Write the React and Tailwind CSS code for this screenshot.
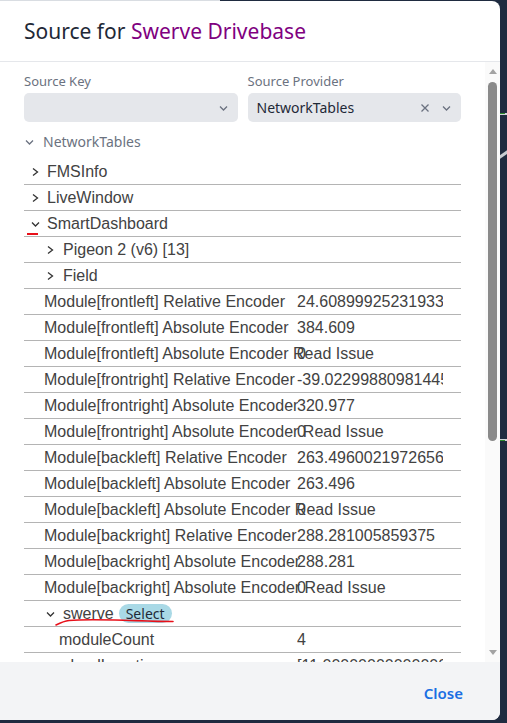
import React from 'react'

const tree = "font-['Liberation_Sans',Arial,sans-serif] text-[16px] text-[#424242]"
const ui = "font-['Noto_Sans','Open_Sans',sans-serif]"

function ChevronRight() {
  return (
    <svg width="10" height="10" viewBox="0 0 10 10" className="shrink-0 text-[#333]" aria-hidden>
      <polyline points="3,1.5 7.5,5 3,8.5" fill="none" stroke="currentColor" strokeWidth="1.3" />
    </svg>
  )
}

function ChevronDown({ className = 'text-[#333]' }) {
  return (
    <svg width="10" height="10" viewBox="0 0 10 10" className={`shrink-0 ${className}`} aria-hidden>
      <polyline points="2,3.5 5.5,7 9,3.5" fill="none" stroke="currentColor" strokeWidth="1.3" />
    </svg>
  )
}

const modules = [
  ['Module[frontleft] Relative Encoder', '24.608999252319336'],
  ['Module[frontleft] Absolute Encoder', '384.609'],
  ['Module[frontleft] Absolute Encoder Read Issue', '0'],
  ['Module[frontright] Relative Encoder', '-39.022998809814453'],
  ['Module[frontright] Absolute Encoder', '320.977'],
  ['Module[frontright] Absolute Encoder Read Issue', '0'],
  ['Module[backleft] Relative Encoder', '263.4960021972656'],
  ['Module[backleft] Absolute Encoder', '263.496'],
  ['Module[backleft] Absolute Encoder Read Issue', '0'],
  ['Module[backright] Relative Encoder', '288.281005859375'],
  ['Module[backright] Absolute Encoder', '288.281'],
  ['Module[backright] Absolute Encoder Read Issue', '0'],
]

function Leaf({ name, value, deep }) {
  return (
    <div className={`flex h-[26px] shrink-0 items-center border-b border-[#b4b4b4] ${deep ? 'pl-[35px]' : 'pl-[20px]'}`}>
      <span className={`shrink-0 whitespace-nowrap ${deep ? 'w-[238px]' : 'w-[253px]'}`}>{name}</span>
      <span className="w-[146px] shrink-0 overflow-hidden whitespace-nowrap">{value}</span>
    </div>
  )
}

export default function App() {
  return (
    <div className="relative flex h-[723px] w-[507px] overflow-hidden bg-[#1f2b40]">
      {/* bits of the app behind the dialog */}
      <div className="absolute left-[500px] top-[113px] h-[2px] w-[7px] bg-[#d0d4d8]" />
      <div className="absolute left-[500px] top-[113px] h-[1px] w-[5px] bg-[#2e8b2e]" />
      <div className="absolute left-[500px] top-[439px] h-[2px] w-[7px] bg-[#d0d4d8]" />
      <div className="absolute left-[500px] top-[440px] h-[1px] w-[5px] bg-[#2e8b2e]" />
      <div className="absolute left-[498px] top-[152px] h-[3px] w-[14px] -rotate-[35deg] bg-[#c8ccd2]" />
      <div className="absolute left-0 top-0 h-[1px] w-[220px] bg-[#d9dde2]" />

      <div className="relative mt-[1px] flex h-[719px] w-[500px] flex-col overflow-hidden rounded-r-[8px] bg-white">
        <header className="flex h-[61px] shrink-0 items-center border-b border-[#e5e7eb] pl-6">
          <h1 className={`${ui} text-[21px] leading-none text-[#1f2937]`}>
            Source for <span className="text-[#800080]">Swerve Drivebase</span>
          </h1>
        </header>

        <div className="flex min-h-0 flex-1">
          <div className="relative min-w-0 flex-1 overflow-hidden pl-6 pr-6 pt-[11px]">
            <div className="grid grid-cols-2 gap-x-[10px]">
              <div>
                <p className={`${ui} text-[13px] leading-4 text-[#6b7280]`}>Source Key</p>
                <div className="mt-1 flex h-[29px] items-center justify-end rounded-[5px] bg-[#e5e7eb] pr-[10px]">
                  <ChevronDown className="text-[#6b7280]" />
                </div>
              </div>
              <div>
                <p className={`${ui} text-[13px] leading-4 text-[#6b7280]`}>Source Provider</p>
                <div className="mt-1 flex h-[29px] items-center rounded-[5px] bg-[#e5e7eb] pl-[9px] pr-[10px]">
                  <span className={`${ui} flex-1 text-[14px] text-[#1f2937]`}>NetworkTables</span>
                  <svg width="10" height="10" viewBox="0 0 10 10" className="text-[#6b7280]" aria-hidden>
                    <path d="M1.5 1.5 8.5 8.5M8.5 1.5 1.5 8.5" stroke="currentColor" strokeWidth="1.3" />
                  </svg>
                  <span className="ml-[11px]">
                    <ChevronDown className="text-[#6b7280]" />
                  </span>
                </div>
              </div>
            </div>

            <div className="flex h-[37px] items-center pt-[2px]">
              <ChevronDown className="text-[#6b7280]" />
              <span className={`${ui} ml-[9px] text-[14px] text-[#6b7280]`}>NetworkTables</span>
            </div>

            <div className={`flex flex-col ${tree}`}>
              <div className="flex h-[26px] shrink-0 items-center border-b border-[#b4b4b4] pl-[6px]">
                <ChevronRight />
                <span className="ml-[7px]">FMSInfo</span>
              </div>
              <div className="flex h-[26px] shrink-0 items-center border-b border-[#b4b4b4] pl-[6px]">
                <ChevronRight />
                <span className="ml-[7px]">LiveWindow</span>
              </div>
              <div className="relative flex h-[26px] shrink-0 items-center border-b border-[#b4b4b4] pl-[6px]">
                <ChevronDown />
                <span className="ml-[7px]">SmartDashboard</span>
                <span className="absolute left-[3px] top-[22px] h-[2px] w-[11px] bg-[#e8101a]" />
              </div>
              <div className="flex h-[26px] shrink-0 items-center border-b border-[#b4b4b4] pl-[21px]">
                <ChevronRight />
                <span className="ml-[8px]">Pigeon 2 (v6) [13]</span>
              </div>
              <div className="flex h-[26px] shrink-0 items-center border-b border-[#b4b4b4] pl-[21px]">
                <ChevronRight />
                <span className="ml-[8px]">Field</span>
              </div>
              {modules.map(([name, value]) => (
                <Leaf key={name} name={name} value={value} />
              ))}
              <div className="relative flex h-[26px] shrink-0 items-center border-b border-[#b4b4b4] pl-[21px]">
                <ChevronDown />
                <span className="ml-[8px]">swerve</span>
                <span className={`${ui} ml-[5px] rounded-full bg-[#a9d9e6] px-[7px] text-[14px] leading-[19px] text-[#1f2937]`}>
                  Select
                </span>
                <svg className="absolute left-[31px] top-[16px]" width="120" height="10" viewBox="0 0 120 10" aria-hidden>
                  <path
                    d="M1 8 C5 6 9 4 14 3.5 S40 2.5 60 3 S100 4.5 118 4.5"
                    fill="none"
                    stroke="#e8101a"
                    strokeWidth="1.6"
                    strokeLinecap="round"
                  />
                </svg>
              </div>
              <Leaf deep name="moduleCount" value="4" />
              <Leaf deep name="wheelLocations" value="[11.000000000000002, 11.0]" />
            </div>
          </div>

          <div className="flex w-[15px] shrink-0 flex-col bg-[#fafafa]">
            <div className="flex h-[17px] items-center justify-center pt-[2px]">
              <svg width="8" height="5" viewBox="0 0 8 5" aria-hidden>
                <polygon points="4,0 8,5 0,5" fill="#a3a3a3" />
              </svg>
            </div>
            <div className="flex-1 px-[3px] pt-[3px]">
              <div className="h-[359px] rounded-full bg-[#8a8a8a]" />
            </div>
            <div className="flex h-[17px] items-center justify-center pb-[2px]">
              <svg width="8" height="5" viewBox="0 0 8 5" aria-hidden>
                <polygon points="0,0 8,0 4,5" fill="#a3a3a3" />
              </svg>
            </div>
          </div>
        </div>

        <footer className="flex h-[58px] shrink-0 items-center justify-end bg-[#f3f4f6] pr-[37px] pt-[4px]">
          <button className={`${ui} text-[15px] font-semibold text-[#1a6fe3]`}>Close</button>
        </footer>
      </div>
    </div>
  )
}
